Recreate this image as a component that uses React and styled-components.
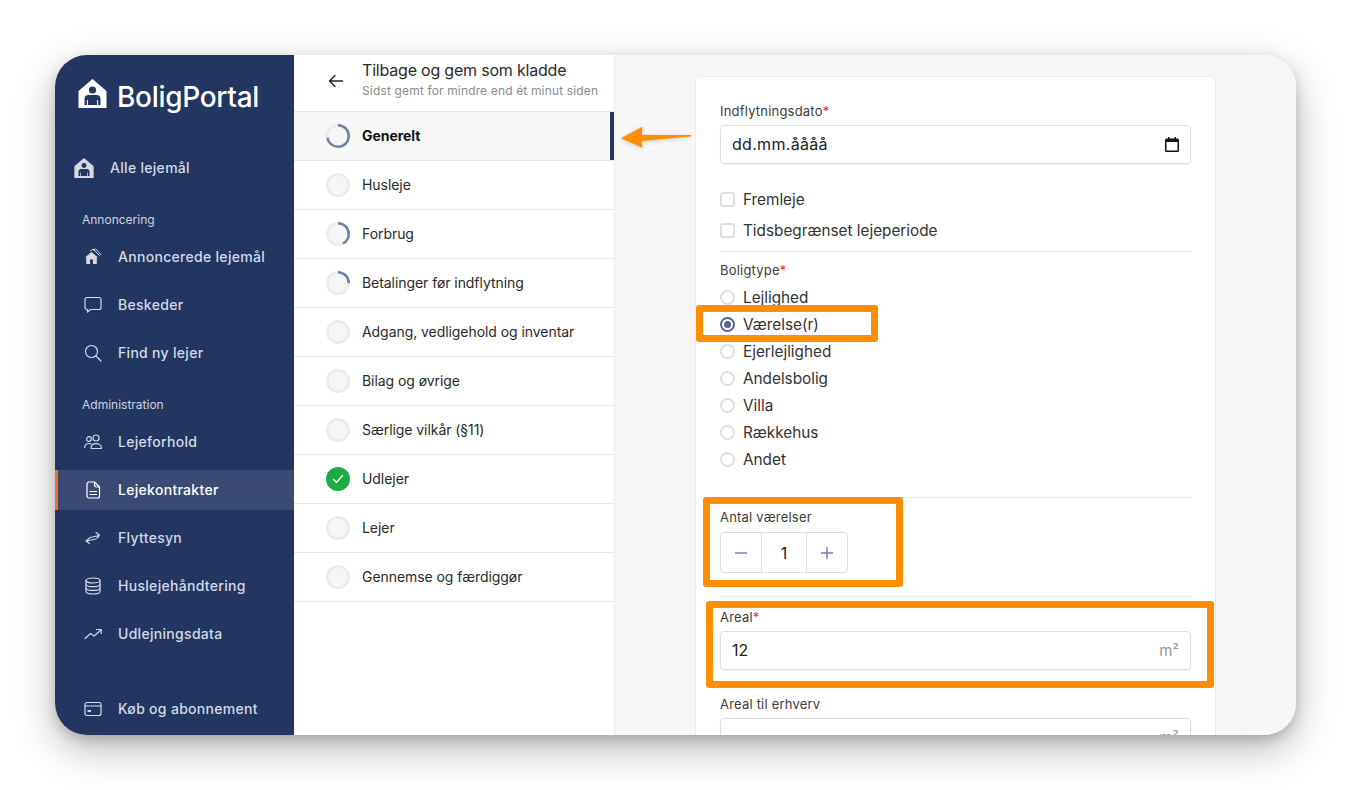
import React from "react";
import styled, { createGlobalStyle } from "styled-components";

const GlobalStyle = createGlobalStyle`
  html, body {
    margin: 0;
    background: #fff;
    font-family: Inter, "Noto Sans", sans-serif;
    -webkit-font-smoothing: antialiased;
  }
  * { box-sizing: border-box; }
`;

const Page = styled.div`
  width: 1351px;
  height: 790px;
  padding: 55px 55px 0;
  overflow: hidden;
`;

const Frame = styled.div`
  position: relative;
  display: flex;
  width: 1241px;
  height: 680px;
  border-radius: 32px;
  overflow: hidden;
`;

const Shadow = styled.div`
  width: 1241px;
  height: 680px;
  border-radius: 32px;
  box-shadow: 0 14px 40px rgba(0, 0, 0, 0.28), 0 5px 12px rgba(0, 0, 0, 0.16);
`;

const IconSvg = styled.svg`
  flex: none;
`;

/* sidebar */
const Sidebar = styled.aside`
  flex: 0 0 239px;
  display: flex;
  flex-direction: column;
  background: #223661;
  color: #d4d9e4;
`;

const Logo = styled.div`
  display: flex;
  align-items: center;
  gap: 10px;
  height: 93px;
  padding: 0 0 16px 23px;
  color: #fff;
  font-size: 28px;
  font-weight: 500;
  letter-spacing: -0.3px;
`;

const LogoText = styled.span`
  margin-top: 6px;
`;

const NavList = styled.nav`
  display: flex;
  flex-direction: column;
  gap: 8px;
  margin-bottom: 24px;
`;

const SectionLabel = styled.div`
  height: 16px;
  line-height: 16px;
  margin-bottom: 9px;
  padding-left: 27px;
  font-size: 12px;
  color: #cdd3df;
`;

const NavItem = styled.a`
  display: flex;
  align-items: center;
  gap: 16px;
  height: 40px;
  padding-left: 29px;
  font-size: 14px;
  font-weight: 500;
  letter-spacing: 0.3px;
  color: ${({ $active }) => ($active ? "#fff" : "#d4d9e4")};
  background: ${({ $active }) => ($active ? "#3a4a73" : "transparent")};
  box-shadow: ${({ $active }) => ($active ? "inset 3px 0 0 #f2702e" : "none")};
`;

const NavText = styled.span`
  margin-top: -2px;
`;

const HomeItem = styled(NavItem)`
  padding-left: 19px;
  margin-bottom: 24px;
`;

const BottomList = styled(NavList)`
  margin-top: auto;
  margin-bottom: 6px;
`;

/* step list */
const Steps = styled.section`
  flex: 0 0 321px;
  background: #fff;
  border-right: 1px solid #ececec;
`;

const StepsHeader = styled.header`
  display: flex;
  align-items: center;
  height: 57px;
  padding: 0 0 4px 34px;
  border-bottom: 1px solid #e8e8e8;
`;

const BackButton = styled.span`
  display: flex;
  width: 34px;
  color: #222;
`;

const Title = styled.div`
  font-size: 16px;
  line-height: 20px;
  margin-top: -2px;
  margin-bottom: 2px;
  letter-spacing: -0.2px;
  color: #2a2a2a;
`;

const Subtitle = styled.div`
  font-size: 12px;
  line-height: 18px;
  color: #8b8b8b;
  white-space: nowrap;
  letter-spacing: 0.15px;
`;

const StepRow = styled.div`
  display: flex;
  align-items: center;
  gap: 12px;
  height: 49px;
  padding-left: 32px;
  border-bottom: 1px solid #e8e8e8;
  font-size: 14px;
  letter-spacing: -0.06px;
  font-weight: ${({ $active }) => ($active ? 700 : 400)};
  color: ${({ $active }) => ($active ? "#111" : "#2a2a2a")};
  background: ${({ $active }) => ($active ? "#f7f7f7" : "#fff")};
  box-shadow: ${({ $active }) => ($active ? "inset -4px 0 0 #223661" : "none")};
`;

const StepText = styled.span`
  margin-top: -2px;
`;

/* form */
const Main = styled.main`
  flex: 1;
  padding: 21px 0 0 80px;
  background: #f7f7f7;
  overflow: hidden;
`;

const Card = styled.div`
  width: 521px;
  height: 800px;
  padding: 25px 24px 0;
  background: #fff;
  border: 1px solid #ececec;
  border-radius: 5px;
`;

const Label = styled.div`
  height: 18px;
  line-height: 18px;
  margin-bottom: ${({ $gap }) => $gap || 5}px;
  font-size: 13px;
  color: #3d3d3d;
  letter-spacing: 0.2px;
  span { color: #e8321a; }
`;

const InputBox = styled.div`
  display: flex;
  align-items: center;
  justify-content: space-between;
  height: 39px;
  padding: 0 11px;
  border: 1px solid #dedede;
  border-radius: 4px;
  background: #fff;
  box-shadow: 0 1px 2px rgba(0, 0, 0, 0.06);
  font-size: 16px;
  color: #222;
`;

const InputValue = styled.span`
  letter-spacing: ${({ $spaced }) => ($spaced ? "0.3px" : "0")};
  margin-top: -2px;
`;

const Unit = styled.span`
  font-size: 15px;
  color: #9a9a9a;
`;

const Checks = styled.div`
  padding: 20px 0 5px;
`;

const CheckRow = styled.div`
  display: flex;
  align-items: center;
  gap: 8px;
  height: 31px;
  font-size: 15.3px;
  color: #333;
`;

const CheckBox = styled.span`
  width: 15px;
  height: 15px;
  border: 2px solid #dfdfdf;
  border-radius: 3px;
`;

const Section = styled.div`
  border-top: ${({ $plain }) => ($plain ? "none" : "1px solid #e8e8e8")};
  padding-top: ${({ $top }) => $top || 10}px;
  padding-bottom: ${({ $bottom }) => $bottom || 0}px;
`;

const RadioRow = styled.div`
  display: flex;
  align-items: center;
  gap: 8px;
  height: 27px;
  font-size: 15.3px;
  color: #333;
`;

const Radio = styled.span`
  display: flex;
  align-items: center;
  justify-content: center;
  width: 15px;
  height: 15px;
  border: 2px solid ${({ $on }) => ($on ? "#55658f" : "#dfdfdf")};
  border-radius: 50%;
  &::after {
    content: "";
    width: 7px;
    height: 7px;
    border-radius: 50%;
    background: ${({ $on }) => ($on ? "#55658f" : "transparent")};
  }
`;

const Stepper = styled.div`
  display: flex;
  width: 128px;
  height: 41px;
  border: 1px solid #dedede;
  border-radius: 4px;
`;

const StepCell = styled.div`
  display: flex;
  align-items: center;
  justify-content: center;
  flex: ${({ $grow }) => ($grow ? "0 0 46px" : "1")};
  font-size: 16px;
  color: #222;
  border-left: ${({ $grow }) => ($grow ? "1px solid #dedede" : "none")};
  border-right: ${({ $grow }) => ($grow ? "1px solid #dedede" : "none")};
`;

/* annotations laid over the screenshot */
const Highlight = styled.div`
  position: absolute;
  left: ${({ $x }) => $x}px;
  top: ${({ $y }) => $y}px;
  width: ${({ $w }) => $w}px;
  height: ${({ $h }) => $h}px;
  border: 7px solid #ff8f00;
  border-radius: 3px;
`;

const ArrowMark = styled.svg`
  position: absolute;
  left: 564px;
  top: 68px;
  filter: drop-shadow(0 1px 2px rgba(0, 0, 0, 0.2));
`;

const Svg = ({ children, stroke = true }) => (
  <IconSvg
    width={18}
    height={18}
    viewBox="0 0 18 18"
    fill="none"
    stroke={stroke ? "currentColor" : "none"}
    strokeWidth="1.2"
    strokeLinecap="round"
    strokeLinejoin="round"
  >
    {children}
  </IconSvg>
);

const LogoHouse = ({ size }) => (
  <IconSvg width={size} height={size} viewBox="0 0 28 29">
    <path fill="currentColor" d="M14 0 L28 12 V29 H0 V12 Z" />
    <circle cx="14" cy="11" r="3.6" fill="#223661" />
    <path fill="#223661" d="M6 26 V20 Q6 16 10 16 H18 Q22 16 22 20 V26 H19.6 V21 H18.6 V26 H9.4 V21 H8.4 V26 Z" />
  </IconSvg>
);

const HousesIcon = () => (
  <Svg stroke={false}>
    <path fill="currentColor" d="M1 9.500 L7.500 4 L14 9.500 L12.800 9.500 V16 H9 V11.500 H6 V16 H2.200 V9.500 Z" />
    <path fill="none" stroke="currentColor" strokeWidth="1" d="M6.500 2.800 L9 1 L15.500 7.500 M9.500 2.200 L11.500 0.800 L17 6.500" />
  </Svg>
);

const ChatIcon = () => (
  <Svg>
    <path d="M3 1.500h12a2 2 0 0 1 2 2v8a2 2 0 0 1-2 2H6.500L3.500 16v-2.500H3a2 2 0 0 1-2-2v-8a2 2 0 0 1 2-2z" />
  </Svg>
);

const SearchIcon = () => (
  <Svg>
    <circle cx="7.500" cy="7.500" r="6" />
    <path d="M12 12l5 5" />
  </Svg>
);

const UsersIcon = () => (
  <Svg>
    <circle cx="12" cy="5" r="3" />
    <path d="M7 15.500c0-3 2-4.800 5-4.800s5.500 1.800 5.500 4.800z" />
    <circle cx="5" cy="6" r="2.300" />
    <path d="M0.700 14.500c0-2.600 1.600-4 4.300-4 .7 0 1.300.1 1.800.3" />
  </Svg>
);

const DocIcon = () => (
  <Svg>
    <path d="M5 1h5.500L15.500 6v9a2 2 0 0 1-2 2H5a2 2 0 0 1-2-2V3a2 2 0 0 1 2-2z" />
    <path d="M10.500 1.500V4a2 2 0 0 0 2 2h2.500M6 10.500h6.500M6 13.500h6.500" />
  </Svg>
);

const MoveIcon = () => (
  <Svg>
    <path d="M6 8.500 L15 6.500 M12 3.500 L15.500 6.300 L13 9" />
    <path d="M12 10 L2.500 12 M5.500 9 L2 12 L5.500 14.500" />
  </Svg>
);

const DataIcon = () => (
  <Svg>
    <ellipse cx="9" cy="3.500" rx="7" ry="2.500" />
    <path d="M2 3.500v11c0 1.400 3.100 2.500 7 2.500s7-1.100 7-2.500v-11" />
    <path d="M2 7.200c0 1.400 3.100 2.500 7 2.500s7-1.100 7-2.500M2 10.900c0 1.400 3.100 2.500 7 2.500s7-1.100 7-2.500" />
  </Svg>
);

const TrendIcon = () => (
  <Svg>
    <path d="M1 13.500 L6.500 8.500 L10 11 L17 5" />
    <path d="M12.500 4.500 H17.200 V8.500" />
  </Svg>
);

const CardIcon = () => (
  <Svg>
    <rect x="1" y="2.500" width="16" height="13" rx="2" />
    <path d="M1 6h16" />
    <rect x="3.500" y="10" width="3.500" height="2" fill="currentColor" stroke="none" />
  </Svg>
);

const ProgressRing = ({ value = 0, done }) => {
  const r = 10.75;
  const length = 2 * Math.PI * r;
  if (done) {
    return (
      <IconSvg width="24" height="24" viewBox="0 0 24 24">
        <circle cx="12" cy="12" r="12" fill="#1fab44" />
        <path d="M7.500 12.500l3 3 6-7" fill="none" stroke="#fff" strokeWidth="1.300" strokeLinecap="round" strokeLinejoin="round" />
      </IconSvg>
    );
  }
  return (
    <IconSvg width="24" height="24" viewBox="0 0 24 24">
      <circle cx="12" cy="12" r={r} fill="#f6f6f6" stroke="#ebebeb" strokeWidth="2.500" />
      {value > 0 && (
        <circle
          cx="12"
          cy="12"
          r={r}
          fill="none"
          stroke="#6f80a5"
          strokeWidth="2.500"
          strokeDasharray={`${length * value} ${length}`}
          transform="rotate(-90 12 12)"
        />
      )}
    </IconSvg>
  );
};

const CalendarIcon = () => (
  <svg width="14" height="15" viewBox="0 0 14 15">
    <path fill="#111" d="M3 0h1.500v1.500h5V0H11v1.500h1.500A1.500 1.500 0 0 1 14 3v10.500a1.500 1.500 0 0 1-1.500 1.500h-11A1.500 1.500 0 0 1 0 13.500V3a1.500 1.500 0 0 1 1.500-1.500H3zM1.500 5v8.500h11V5z" />
  </svg>
);

const annoncering = [
  { label: "Annoncerede lejemål", Icon: HousesIcon },
  { label: "Beskeder", Icon: ChatIcon },
  { label: "Find ny lejer", Icon: SearchIcon },
];

const administration = [
  { label: "Lejeforhold", Icon: UsersIcon },
  { label: "Lejekontrakter", Icon: DocIcon, active: true },
  { label: "Flyttesyn", Icon: MoveIcon },
  { label: "Huslejehåndtering", Icon: DataIcon },
  { label: "Udlejningsdata", Icon: TrendIcon },
];

const steps = [
  { label: "Generelt", value: 0.72, active: true },
  { label: "Husleje" },
  { label: "Forbrug", value: 0.42 },
  { label: "Betalinger før indflytning", value: 0.25 },
  { label: "Adgang, vedligehold og inventar" },
  { label: "Bilag og øvrige" },
  { label: "Særlige vilkår (§11)" },
  { label: "Udlejer", done: true },
  { label: "Lejer" },
  { label: "Gennemse og færdiggør" },
];

const boligtyper = ["Lejlighed", "Værelse(r)", "Ejerlejlighed", "Andelsbolig", "Villa", "Rækkehus", "Andet"];

const App = () => {
  return (
    <>
      <GlobalStyle />
      <Page>
        <Shadow>
          <Frame>
            <Sidebar>
              <Logo>
                <LogoHouse size={29} />
                <LogoText>BoligPortal</LogoText>
              </Logo>
              <HomeItem>
                <LogoHouse size={20} />
                <NavText>Alle lejemål</NavText>
              </HomeItem>
              <SectionLabel>Annoncering</SectionLabel>
              <NavList>
                {annoncering.map(({ label, Icon }) => (
                  <NavItem key={label}>
                    <Icon />
                    <NavText>{label}</NavText>
                  </NavItem>
                ))}
              </NavList>
              <SectionLabel>Administration</SectionLabel>
              <NavList>
                {administration.map(({ label, Icon, active }) => (
                  <NavItem key={label} $active={active}>
                    <Icon />
                    <NavText>{label}</NavText>
                  </NavItem>
                ))}
              </NavList>
              <BottomList>
                <NavItem>
                  <CardIcon />
                  <NavText>Køb og abonnement</NavText>
                </NavItem>
              </BottomList>
            </Sidebar>

            <Steps>
              <StepsHeader>
                <BackButton>
                  <svg width="16" height="16" viewBox="0 0 16 16" fill="none" stroke="currentColor" strokeWidth="1.400" strokeLinecap="round" strokeLinejoin="round">
                    <path d="M14.500 8H1.500M7 2.500L1.500 8 7 13.500" />
                  </svg>
                </BackButton>
                <div>
                  <Title>Tilbage og gem som kladde</Title>
                  <Subtitle>Sidst gemt for mindre end ét minut siden</Subtitle>
                </div>
              </StepsHeader>
              {steps.map(({ label, value, done, active }) => (
                <StepRow key={label} $active={active}>
                  <ProgressRing value={value} done={done} />
                  <StepText>{label}</StepText>
                </StepRow>
              ))}
            </Steps>

            <Main>
              <Card>
                <Label>
                  Indflytningsdato<span>*</span>
                </Label>
                <InputBox>
                  <InputValue $spaced>dd.mm.åååå</InputValue>
                  <CalendarIcon />
                </InputBox>
                <Checks>
                  <CheckRow>
                    <CheckBox />
                    Fremleje
                  </CheckRow>
                  <CheckRow>
                    <CheckBox />
                    Tidsbegrænset lejeperiode
                  </CheckRow>
                </Checks>
                <Section $top={9} $bottom={24}>
                  <Label $gap={5}>
                    Boligtype<span>*</span>
                  </Label>
                  {boligtyper.map((type) => (
                    <RadioRow key={type}>
                      <Radio $on={type === "Værelse(r)"} />
                      {type}
                    </RadioRow>
                  ))}
                </Section>
                <Section $bottom={23}>
                  <Label $gap={6}>Antal værelser</Label>
                  <Stepper>
                    <StepCell>
                      <svg width="14" height="14" viewBox="0 0 14 14" stroke="#6f80a5" strokeWidth="1.400">
                        <path d="M1 7h12" />
                      </svg>
                    </StepCell>
                    <StepCell $grow>1</StepCell>
                    <StepCell>
                      <svg width="14" height="14" viewBox="0 0 14 14" stroke="#6f80a5" strokeWidth="1.400">
                        <path d="M1 7h12M7 1v12" />
                      </svg>
                    </StepCell>
                  </Stepper>
                </Section>
                <Section $top={11}>
                  <Label>
                    Areal<span>*</span>
                  </Label>
                  <InputBox>
                    <InputValue>12</InputValue>
                    <Unit>m²</Unit>
                  </InputBox>
                </Section>
                <Section $plain $top={25}>
                  <Label>Areal til erhverv</Label>
                  <InputBox>
                    <span />
                    <Unit>m²</Unit>
                  </InputBox>
                </Section>
              </Card>
            </Main>

            <ArrowMark width="74" height="26" viewBox="0 0 74 26">
              <path fill="#ff8f00" d="M2 15.300 L23.300 3.700 L23 12 L72 12 L72 13.500 L23 18 L23.300 24.700 Z" />
            </ArrowMark>
            <Highlight $x={641} $y={250} $w={182} $h={37} />
            <Highlight $x={648} $y={442} $w={200} $h={90} />
            <Highlight $x={651} $y={546} $w={508} $h={87} />
          </Frame>
        </Shadow>
      </Page>
    </>
  );
};

export default App;
